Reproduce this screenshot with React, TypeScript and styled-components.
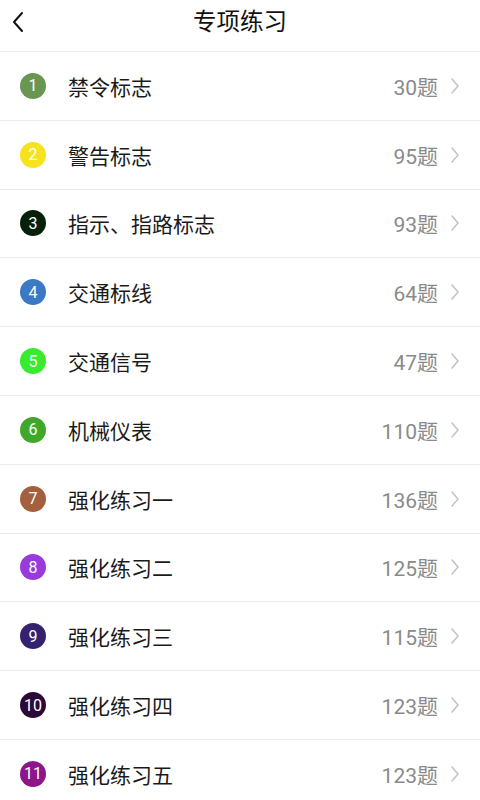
import React from 'react';
import styled, { createGlobalStyle } from 'styled-components';

const GlobalStyle = createGlobalStyle`
  html, body {
    margin: 0;
    padding: 0;
    background: #ffffff;
    font-family: Roboto, "Noto Sans CJK SC", sans-serif;
  }
`

interface Topic {
  name: string;
  count: number;
  color: string;
}

const topics: Topic[] = [
  { name: '禁令标志', count: 30, color: '#699652' },
  { name: '警告标志', count: 95, color: '#f7e21e' },
  { name: '指示、指路标志', count: 93, color: '#06200a' },
  { name: '交通标线', count: 64, color: '#3b78c6' },
  { name: '交通信号', count: 47, color: '#36ec2c' },
  { name: '机械仪表', count: 110, color: '#3fa82a' },
  { name: '强化练习一', count: 136, color: '#a35f3e' },
  { name: '强化练习二', count: 125, color: '#993add' },
  { name: '强化练习三', count: 115, color: '#34216f' },
  { name: '强化练习四', count: 123, color: '#2c0a38' },
  { name: '强化练习五', count: 123, color: '#8d1689' },
]

const App = () => {
  return (
    <Page>
      <GlobalStyle />
      <Header>
        <BackButton aria-label="返回">
          <svg width="14" height="22" viewBox="0 0 14 22" fill="none">
            <path d="M11 2 L3 11 L11 20" stroke="#111" strokeWidth="2" strokeLinecap="round" strokeLinejoin="round" />
          </svg>
        </BackButton>
        <Title>专项练习</Title>
      </Header>
      <List>
        {topics.map((t, i) => (
          <Row key={t.name}>
            <Badge color={t.color}>{i + 1}</Badge>
            <Name>{t.name}</Name>
            <Count>{t.count}题</Count>
            <Chevron width="10" height="18" viewBox="0 0 10 18" fill="none">
              <path d="M2 2 L8 9 L2 16" stroke="#c4c4c4" strokeWidth="1.6" strokeLinecap="round" strokeLinejoin="round" />
            </Chevron>
          </Row>
        ))}
      </List>
    </Page>
  );
};

export default App;

const Page = styled.div`
  width: 480px;
  min-height: 800px;
  background: #fff;
`
const Header = styled.div`
  position: relative;
  height: 51px;
  display: flex;
  align-items: center;
  justify-content: center;
  border-bottom: solid 1px #f0f0f0;
`
const BackButton = styled.button`
  position: absolute;
  left: 11px;
  top: 11px;
  padding: 0;
  border: none;
  background: none;
  display: flex;
`
const Title = styled.h1`
  margin: 0;
  font-size: 23.5px;
  font-weight: 400;
  color: #111;
  font-family: "Noto Sans CJK SC", sans-serif;
  line-height: 1;
  margin-top: -9px;
`
const List = styled.div`
  display: flex;
  flex-direction: column;
`
const Row = styled.div`
  height: 67.8px;
  display: flex;
  align-items: center;
  padding: 0 20px 0 20px;
  border-bottom: solid 1px #ebebeb;
`
const Badge = styled.div<{ color: string }>`
  width: 26px;
  height: 26px;
  border-radius: 50%;
  background: ${props => props.color};
  color: #fff;
  font-size: 16px;
  display: flex;
  align-items: center;
  justify-content: center;
  font-family: Roboto, sans-serif;
  flex-shrink: 0;
`
const Name = styled.div`
  margin-left: 22px;
  flex: 1;
  font-size: 21px;
  color: #1a1a1a;
  font-family: "Noto Sans CJK SC", sans-serif;
`
const Count = styled.div`
  font-size: 21px;
  color: #8a8a8a;
  font-family: Roboto, "Noto Sans CJK SC", sans-serif;
`
const Chevron = styled.svg`
  margin-left: 12px;
`
